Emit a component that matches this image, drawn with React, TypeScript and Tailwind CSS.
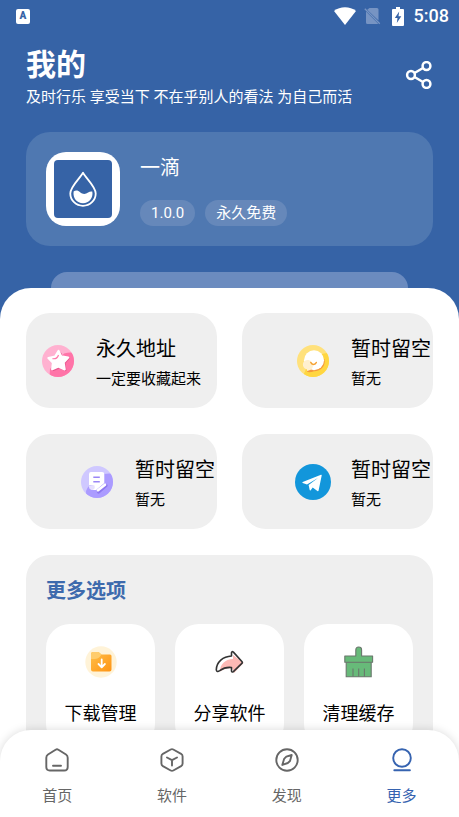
import { useState, type ReactNode } from 'react';

function WifiIcon() {
  return (
    <svg className="h-[18px] w-[22px]" viewBox="0 0 22 18" fill="currentColor">
      <path d="M11 18L0 4C6-.9 16-.9 22 4z" />
    </svg>
  );
}

function NoSimIcon() {
  return (
    <svg className="h-[18px] w-[17px]" viewBox="0 0 17 18">
      <path d="M5.500 1H13q1.500 0 1.500 1.500V13.500L3.200 2.800zM2 4.500L14 16.500q-.4.500-1 .5H3.500Q2 17 2 15.500z" fill="#7794c3" />
      <path d="M.8 1.800l15 15" stroke="#7794c3" strokeWidth="1.300" />
    </svg>
  );
}

function BatteryIcon() {
  return (
    <svg className="h-[19px] w-3" viewBox="0 0 12 19">
      <path d="M4 0h4v2h3q1 0 1 1v15q0 1-1 1H1q-1 0-1-1V3q0-1 1-1h3z" fill="#fff" />
      <path d="M7.200 4.500L2.800 11h2.700l-.7 5 4.500-6.800H6.500z" fill="#3663a6" />
    </svg>
  );
}

function ShareIcon() {
  return (
    <svg className="size-7" viewBox="0 0 28 28" fill="none" stroke="currentColor" strokeWidth="2.500">
      <circle cx="21.500" cy="5" r="3.900" />
      <circle cx="6" cy="14" r="3.900" />
      <circle cx="21.500" cy="23" r="3.900" />
      <path d="M9.500 12l8.500-5M9.500 16l8.500 5" />
    </svg>
  );
}

function DropIcon() {
  return (
    <svg className="h-9 w-7" viewBox="0 0 28 36">
      <path
        d="M14 1.800C10.500 8 1.300 15.500 1.300 22.500a12.700 12.300 0 0 0 25.400 0C26.700 15.500 17.500 8 14 1.800z"
        fill="none"
        stroke="#fff"
        strokeWidth="1.800"
        strokeLinejoin="round"
      />
      <path
        d="M4.600 20.600c2-1.700 4.600-1.200 6.500.6 2.400 2.200 5.500 2.200 8 .3 1.300-1 2.800-1.300 4.200-1C24.500 27 20 32.300 14 32.300S3.700 27.500 4.600 20.600z"
        fill="#fff"
      />
    </svg>
  );
}

function StarIcon() {
  return (
    <svg className="size-8 rounded-full" viewBox="0 0 32 32">
      <path d="M0 0h32v32H0z" fill="#ffb1d0" />
      <path d="M22 8.500q6-1.500 10-.5v24H7.500L8 24z" fill="#ff74a8" />
      <path
        d="M18.500 8.500l2 4 6 1-4 4.700 1 7-6.200-2.700-6 2.500z"
        fill="#e8588f"
        stroke="#e8588f"
        strokeWidth="2"
        strokeLinejoin="round"
      />
      <path
        d="M16.500 6l2.800 5.400 6.900 1.100-4.600 4.900 1.100 7-6.400-2.900-6.100 2.700.8-6.500-4.600-4.700 6.700-1.400z"
        fill="#fff"
        stroke="#fff"
        strokeWidth="2.200"
        strokeLinejoin="round"
      />
      <path d="M10.500 13.700c3.200.4 5.200-1 6-3.700" fill="none" stroke="#ff74a8" strokeWidth="1.200" />
    </svg>
  );
}

function ChatIcon() {
  return (
    <svg className="size-8 rounded-full" viewBox="0 0 32 32">
      <path d="M0 0h32v32H0z" fill="#ffe17c" />
      <path d="M25 9q5-1.500 7-1v24H5.500L9 24z" fill="#ffd640" />
      <path d="M27.500 14c1.500 7-4 12.500-10.500 12.300-2 .8-4.500 1-7 .7l1.500-3z" fill="#f5983c" />
      <circle cx="17" cy="15.300" r="10" fill="#fff" />
      <path d="M8 15.800c3.500-2 8 .5 8 4.700 0 3.500-3 5-6 5.300v-1.300C5.500 23.500 4.500 17.800 8 15.800z" fill="#fff0cf" />
      <path d="M13.800 17.500c1 2.500 4.500 2.500 5.500 0" fill="none" stroke="#f5a030" strokeWidth="1.500" strokeLinecap="round" />
    </svg>
  );
}

function NoteIcon() {
  return (
    <svg className="size-8 rounded-full" viewBox="0 0 32 32">
      <path d="M0 0h32v32H0z" fill="#cfc8ff" />
      <path d="M23 8q6-1 9 0v24H5.500L5 25q1-3 3-5z" fill="#ab9bff" />
      <path d="M8 19.500h9l-2 4.500H10.500Q7.500 23 8 19.500z" fill="#e6e0ff" />
      <path d="M10 6h11q2.300 0 2.300 2.300V17L15 24h-3.500q3-1 2-4.200L8 19V8.300Q8 6 10 6z" fill="#fff" />
      <path d="M12.300 11.300h6.500M12.300 15.700h6.500" stroke="#9a86f5" strokeWidth="1.500" />
      <path d="M17.500 26l7.500-6.500" stroke="#8d78ef" strokeWidth="3.200" strokeLinecap="round" />
      <path d="M17 24.300l7-5.600" stroke="#fff" strokeWidth="2.600" strokeLinecap="round" />
    </svg>
  );
}

function TelegramIcon() {
  return (
    <svg className="size-9" viewBox="0 0 36 36">
      <circle cx="18" cy="18" r="18" fill="#1296db" />
      <path d="M7.700 18.100L26 10.800q.9-.3.700.7L23.600 26.500q-.3 1.100-1.200.5l-4.700-3.400-2.200 2.800q-.6.500-.8-.3l-1.100-5.100 9.700-7.200L12 20.400l-4.300-1.400q-.8-.4 0-.9z" fill="#fff" />
    </svg>
  );
}

function DownloadIcon() {
  return (
    <svg className="size-8" viewBox="0 0 32 32">
      <defs>
        <linearGradient id="folder" x1="0" y1="0" x2="1" y2="1">
          <stop offset="0" stopColor="#ffc04a" />
          <stop offset="1" stopColor="#ff9413" />
        </linearGradient>
      </defs>
      <circle cx="16" cy="16" r="15.700" fill="#fff3d8" />
      <path d="M8 6h5.500l3 2.500H25q1.500 0 1.500 1.500v13.500q0 2-2 2H8q-2 0-2-2V8q0-2 2-2z" fill="url(#folder)" />
      <path d="M6 13c6 .5 8.500-1 10.500-4.500L13.500 6H8Q6 6 6 8z" fill="#ffcc6b" />
      <path d="M16.700 13.500v7.500M13.500 18l3.200 3.300 3.200-3.300" fill="none" stroke="#fff" strokeWidth="1.800" strokeLinecap="round" strokeLinejoin="round" />
    </svg>
  );
}

function ForwardIcon() {
  return (
    <svg className="h-6 w-[30px]" viewBox="0 0 30 24">
      <path
        d="M5 21.500c0-7.500 5-12 13-12.500V5l10.500 8L19 23l-1.500-4.500c-5-1-9 1-12.500 3z"
        fill="#fdb9b5"
      />
      <path
        d="M1.300 19.800C1.500 12 8 6.500 16.500 6V2.600q.4-1.600 1.900-.5l8.700 9.600q.6.800 0 1.500l-8.700 8.400q-1.500 1-1.900-.5V17.500c-4.500-.5-8.500.8-11.800 3.200q-2.900 2-3.400-.9z"
        fill="none"
        stroke="#333"
        strokeWidth="1.600"
        strokeLinejoin="round"
      />
    </svg>
  );
}

function BrushIcon() {
  return (
    <svg className="h-8 w-[30px]" viewBox="0 0 30 32" fill="#67ba79" stroke="#6b776d" strokeWidth="1.100">
      <path d="M2.200 16v14.800h25V16z" />
      <path d="M11.800 10V4q0-3 2.900-3t2.900 3v6h11v6.200H.8V10z" strokeLinejoin="round" />
      <path d="M9 22.500v8M14.700 22.500v8M20.400 22.500v8" fill="none" />
    </svg>
  );
}

function NavIcon({ children }: { children: ReactNode }) {
  return (
    <svg
      className="size-6"
      viewBox="0 0 24 24"
      fill="none"
      stroke="currentColor"
      strokeWidth="1.900"
      strokeLinecap="round"
      strokeLinejoin="round"
    >
      {children}
    </svg>
  );
}

const tags = ['1.0.0', '永久免费'];

const links = [
  { title: '永久地址', text: '一定要收藏起来', icon: <StarIcon />, align: 'justify-start pl-3.5' },
  { title: '暂时留空', text: '暂无', icon: <ChatIcon />, align: 'justify-end' },
  { title: '暂时留空', text: '暂无', icon: <NoteIcon />, align: 'justify-end' },
  { title: '暂时留空', text: '暂无', icon: <TelegramIcon />, align: 'justify-end' },
];

const options = [
  { label: '下载管理', icon: <DownloadIcon /> },
  { label: '分享软件', icon: <ForwardIcon /> },
  { label: '清理缓存', icon: <BrushIcon /> },
];

const tabs = [
  {
    label: '首页',
    icon: (
      <NavIcon>
        <path d="M10.600 1.700q1.400-.8 2.800 0l7.600 4.800q1.700 1.200 1.700 3.200v9.300q0 3.500-3.500 3.500H4.800q-3.500 0-3.500-3.500V9.700q0-2 1.700-3.200zM8 17.800h8" />
      </NavIcon>
    ),
  },
  {
    label: '软件',
    icon: (
      <NavIcon>
        <path d="M10.700 1.500q1.300-.7 2.600 0l7.800 4.300q1.500.9 1.500 2.600v7.200q0 1.700-1.500 2.600l-7.800 4.300q-1.300.7-2.600 0l-7.800-4.300q-1.500-.9-1.500-2.600V8.400q0-1.700 1.500-2.600zM7 9.500l5 2.700 5-2.700M12 12.200v5.300" />
      </NavIcon>
    ),
  },
  {
    label: '发现',
    icon: (
      <NavIcon>
        <circle cx="12" cy="12" r="10.700" />
        <path d="M16.700 7l-1.700 6-2.200 2-5.500 1.900 1.800-6 2.200-2.200z" />
      </NavIcon>
    ),
  },
  {
    label: '更多',
    icon: (
      <NavIcon>
        <circle cx="12" cy="10" r="8.800" />
        <path d="M4.300 22.300h15.600" />
      </NavIcon>
    ),
  },
];

export default function App() {
  const [active, setActive] = useState('更多');

  return (
    <div className="flex h-screen flex-col overflow-hidden bg-[#3663a6] font-[Roboto,'Noto_Sans_CJK_SC',sans-serif] text-black">
      <div className="flex h-8 shrink-0 items-center justify-between pr-[10px] pl-4 text-white">
        <span className="flex h-[15px] w-[14px] items-center justify-center rounded-xs bg-white text-[10px] leading-none font-black text-[#3663a6]">
          A
        </span>
        <div className="flex items-center">
          <WifiIcon />
          <span className="ml-2">
            <NoSimIcon />
          </span>
          <span className="ml-[11px]">
            <BatteryIcon />
          </span>
          <span className="ml-[10px] text-lg leading-none font-medium">5:08</span>
        </div>
      </div>

      <main className="flex min-h-0 flex-1 flex-col overflow-y-auto [scrollbar-width:none]">
        <header className="flex items-center justify-between px-[26px] pt-[13px] text-white">
          <div>
            <h1 className="text-[30px] leading-10 font-bold">我的</h1>
            <p className="text-[15px] leading-6">及时行乐 享受当下 不在乎别人的看法 为自己而活</p>
          </div>
          <button aria-label="分享" className="pb-1">
            <ShareIcon />
          </button>
        </header>

        <section className="mx-[26px] mt-[23px] flex gap-5 rounded-3xl bg-[#4f78b1] p-5 text-white">
          <div className="flex size-[74px] items-center justify-center rounded-[20px] bg-white">
            <div className="flex size-[58px] items-center justify-center rounded-sm bg-[#3663a6]">
              <DropIcon />
            </div>
          </div>
          <div className="flex flex-col justify-between">
            <h2 className="text-xl leading-8">一滴</h2>
            <div className="flex gap-[10px]">
              {tags.map((t) => (
                <span key={t} className="rounded-full bg-[#6688ba] px-[11px] text-[15px] leading-[26px]">
                  {t}
                </span>
              ))}
            </div>
          </div>
        </section>

        <div className="mx-[51px] mt-[26px] h-4 shrink-0 rounded-t-2xl bg-[#6b8bbf]" />

        <div className="flex-1 rounded-t-[31px] bg-white px-[26px] pt-[25px] pb-24">
          <div className="grid grid-cols-2 gap-x-[25px] gap-y-[26px]">
            {links.map((l, i) => (
              <a key={i} href="#" className={`flex h-[95px] items-center gap-5 rounded-3xl bg-[#efefef] ${l.align}`}>
                <span className="flex w-9 shrink-0 justify-center">{l.icon}</span>
                <span className="shrink-0 pt-1.5 pr-0.5">
                  <span className="block text-xl leading-[30px]">{l.title}</span>
                  <span className="block text-[15px] leading-[30px]">{l.text}</span>
                </span>
              </a>
            ))}
          </div>

          <section className="mt-[26px] rounded-3xl bg-[#efefef] p-5">
            <h2 className="text-xl leading-8 font-bold text-[#3d6aad]">更多选项</h2>
            <div className="mt-[17px] grid grid-cols-3 gap-5">
              {options.map((o) => (
                <button key={o.label} className="flex flex-col items-center rounded-3xl bg-white pt-5 pb-5">
                  <span className="flex h-9 items-center">{o.icon}</span>
                  <span className="mt-5 text-lg leading-7">{o.label}</span>
                </button>
              ))}
            </div>
          </section>
        </div>
      </main>

      <nav className="relative -mt-[87px] grid h-[87px] shrink-0 grid-cols-4 rounded-t-[31px] bg-white shadow-[0_0_10px_rgba(0,0,0,0.15)]">
        {tabs.map((t) => (
          <button
            key={t.label}
            onClick={() => setActive(t.label)}
            className={`flex flex-col items-center pt-[18px] ${active === t.label ? 'text-[#3663b0]' : 'text-[#666]'}`}
          >
            {t.icon}
            <span className="mt-3 text-[15px] leading-6">{t.label}</span>
          </button>
        ))}
      </nav>
    </div>
  );
}
